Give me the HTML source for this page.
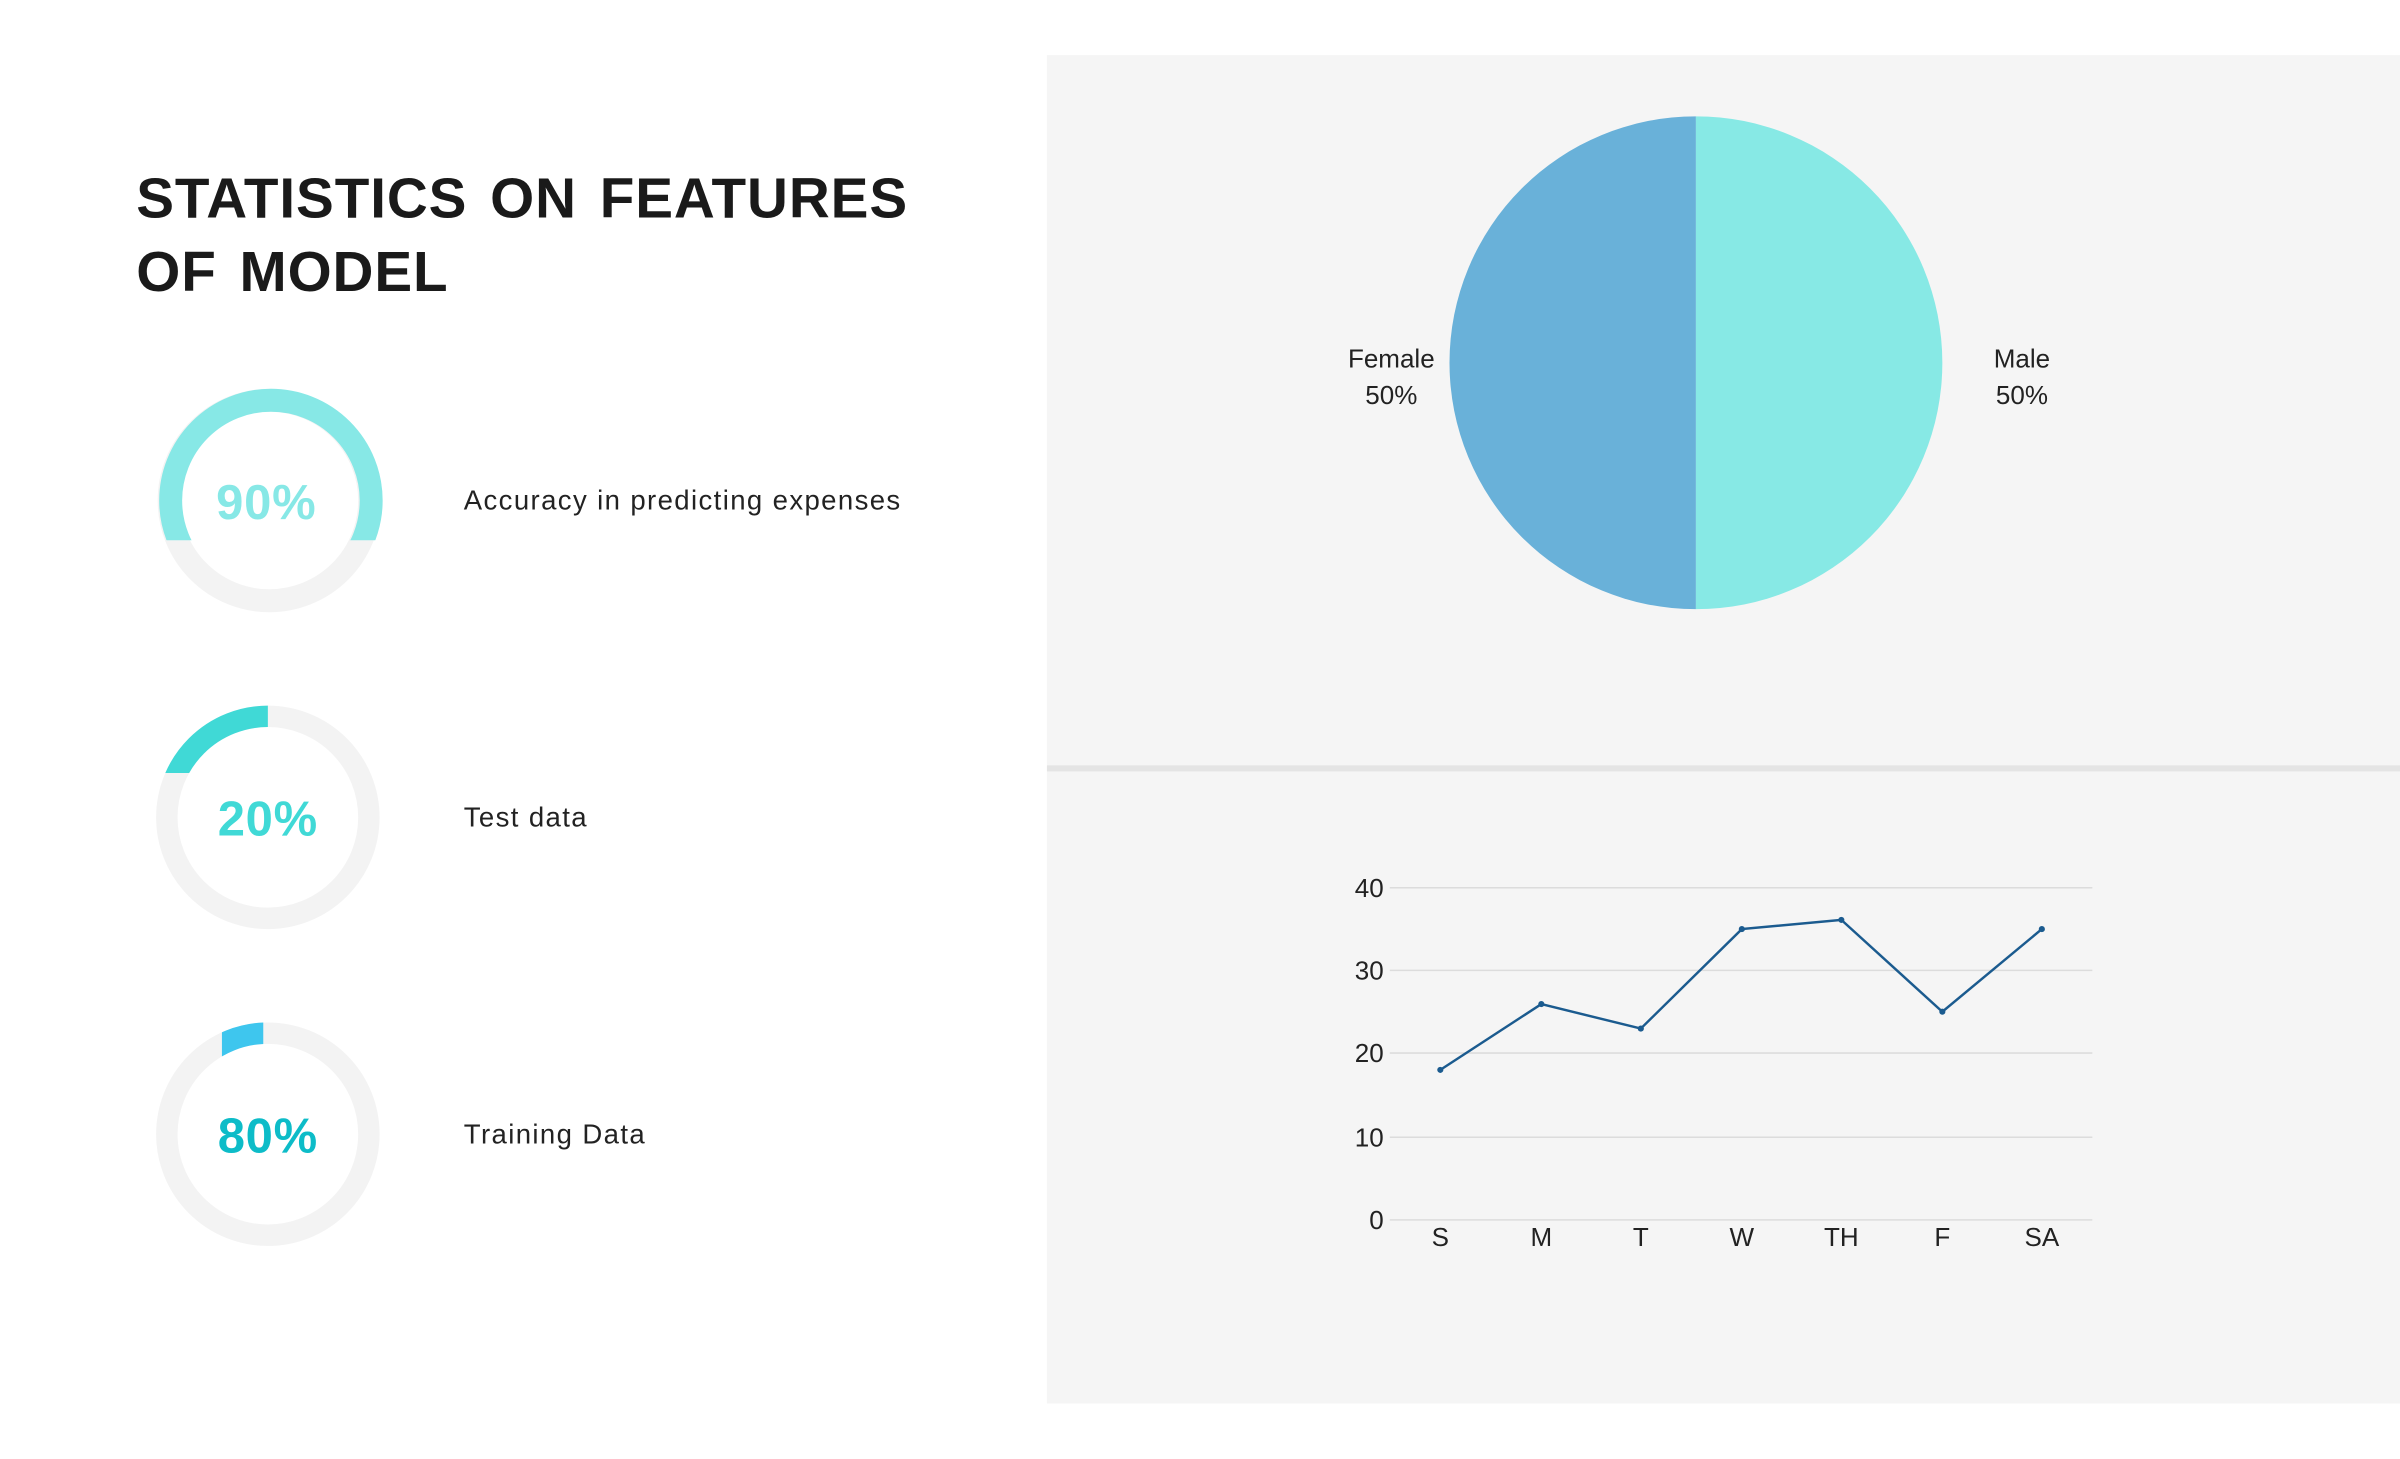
<!DOCTYPE html>
<html><head><meta charset="utf-8"><style>
html,body{margin:0;padding:0;background:#fff;width:2400px;height:1459px;overflow:hidden}
#w{position:absolute;left:0;top:0;width:1568px;height:953px;transform:scale(1.530612);transform-origin:0 0;font-family:"Liberation Sans",sans-serif}
.panel{position:absolute;left:684px;top:36px;width:884px;height:881px;background:#f5f5f5}
.sep{position:absolute;left:684px;top:500px;width:884px;height:4px;background:#e4e4e4}
h1{position:absolute;left:89px;top:106px;margin:0;font-size:37px;line-height:48px;font-weight:bold;color:#1a1a1a;letter-spacing:0.6px;word-spacing:4px}
.lbl{position:absolute;left:303px;font-size:18px;color:#222;letter-spacing:0.9px}
</style></head><body><div id="w">
<div class="panel"></div><div class="sep"></div>
<h1>STATISTICS ON FEATURES<br>OF MODEL</h1>
<svg width="684" height="953" style="position:absolute;left:0;top:0">
<defs>
<clipPath id="c1"><rect x="0" y="0" width="400" height="353"/></clipPath>
<clipPath id="c2"><rect x="0" y="400" width="175" height="105"/></clipPath>
<clipPath id="c3"><rect x="145" y="600" width="27" height="91"/></clipPath>
</defs>
<circle cx="176" cy="327" r="65.5" fill="none" stroke="#f3f3f3" stroke-width="15"/>
<circle cx="177" cy="327" r="65.5" fill="none" stroke="#87e8e6" stroke-width="15" clip-path="url(#c1)"/>
<circle cx="175" cy="534" r="66" fill="none" stroke="#f3f3f3" stroke-width="14"/>
<circle cx="175" cy="534" r="66" fill="none" stroke="#40d9d6" stroke-width="14" clip-path="url(#c2)"/>
<circle cx="175" cy="741" r="66" fill="none" stroke="#f3f3f3" stroke-width="14"/>
<circle cx="175" cy="741" r="66" fill="none" stroke="#3ec6ee" stroke-width="14" clip-path="url(#c3)"/>
<g font-family="Liberation Sans,sans-serif" font-weight="bold" font-size="32" text-anchor="middle" letter-spacing="0.5">
<text x="174" y="339" fill="#87e8e6">90%</text>
<text x="175" y="546" fill="#40d9d6">20%</text>
<text x="175" y="753" fill="#0dbcc8">80%</text>
</g>
</svg>
<div class="lbl" style="top:317px">Accuracy in predicting expenses</div>
<div class="lbl" style="top:524px">Test data</div>
<div class="lbl" style="top:731px">Training Data</div>
<svg width="1568" height="953" style="position:absolute;left:0;top:0" font-family="Liberation Sans,sans-serif" fill="#222">
<path d="M1108 76 A161 161 0 0 0 1108 398 Z" fill="#69b1d9"/>
<path d="M1108 76 A161 161 0 0 1 1108 398 Z" fill="#87e9e5"/>
<g font-size="17" text-anchor="middle">
<text x="909" y="240">Female</text><text x="909" y="264">50%</text>
<text x="1321" y="240">Male</text><text x="1321" y="264">50%</text>
</g>
<g stroke="#dcdcdc" stroke-width="1">
<line x1="908" y1="580" x2="1367" y2="580"/><line x1="908" y1="634" x2="1367" y2="634"/>
<line x1="908" y1="688" x2="1367" y2="688"/><line x1="908" y1="743" x2="1367" y2="743"/>
<line x1="908" y1="797" x2="1367" y2="797"/>
</g>
<g font-size="17" text-anchor="end">
<text x="904" y="586">40</text><text x="904" y="640">30</text><text x="904" y="694">20</text><text x="904" y="749">10</text><text x="904" y="803">0</text>
</g>
<g font-size="17" text-anchor="middle">
<text x="941" y="814">S</text><text x="1007" y="814">M</text><text x="1072" y="814">T</text><text x="1138" y="814">W</text><text x="1203" y="814">TH</text><text x="1269" y="814">F</text><text x="1334" y="814">SA</text>
</g>
<polyline points="941,699 1007,656 1072,672 1138,607 1203,601 1269,661 1334,607" fill="none" stroke="#1b5b8f" stroke-width="1.6"/>
<g fill="#1b5b8f"><circle cx="941" cy="699" r="2"/><circle cx="1007" cy="656" r="2"/><circle cx="1072" cy="672" r="2"/><circle cx="1138" cy="607" r="2"/><circle cx="1203" cy="601" r="2"/><circle cx="1269" cy="661" r="2"/><circle cx="1334" cy="607" r="2"/></g>
</svg>
</div></body></html>
